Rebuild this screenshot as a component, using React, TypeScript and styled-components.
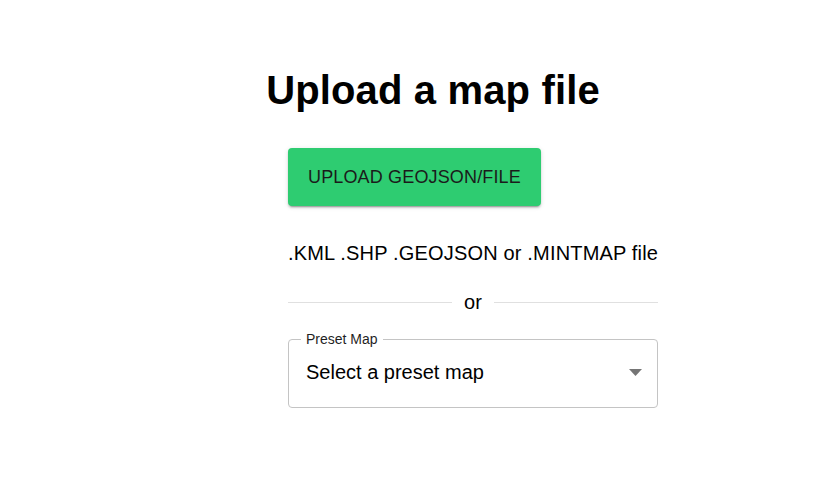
import React from 'react';
import styled, { createGlobalStyle } from 'styled-components';

const GlobalStyle = createGlobalStyle`
  body {
    margin: 0;
    background: #ffffff;
    font-family: "Liberation Sans", Arial, sans-serif;
    color: #000000;
  }
`;

const Page = styled.div`
  padding: 66px 0 0 266px;
  display: flex;
  flex-direction: column;
  align-items: flex-start;
`;

const Heading = styled.h1`
  margin: 0;
  width: 334px;
  text-align: center;
  font-size: 40px;
  line-height: 48px;
  font-weight: 700;
  letter-spacing: 0.15px;
`;

const Column = styled.div`
  margin: 34px 0 0 22px;
  width: 370px;
  display: flex;
  flex-direction: column;
  align-items: flex-start;
`;

const UploadButton = styled.button`
  height: 58px;
  padding: 0 20px;
  border: none;
  border-radius: 4px;
  background: #2ecc71;
  color: #1b1b1b;
  font-family: inherit;
  font-size: 18px;
  letter-spacing: 0.15px;
  text-transform: uppercase;
  cursor: pointer;
  box-shadow: 0 3px 1px -2px rgba(0, 0, 0, 0.2), 0 2px 2px 0 rgba(0, 0, 0, 0.14),
    0 1px 5px 0 rgba(0, 0, 0, 0.12);
`;

const Hint = styled.p`
  margin: 35px 0 0;
  font-size: 20px;
  line-height: 24px;
  letter-spacing: 0.17px;
  white-space: nowrap;
`;

const Divider = styled.div`
  margin-top: 25px;
  width: 100%;
  display: flex;
  align-items: center;
  gap: 12px;
  font-size: 20px;
  line-height: 24px;

  &::before,
  &::after {
    content: '';
    flex: 1;
    border-top: 1px solid #e0e0e0;
  }
`;

const SelectBox = styled.div`
  position: relative;
  margin-top: 25px;
  box-sizing: border-box;
  width: 100%;
  height: 69px;
  padding: 0 15px 4px 17px;
  border: 1px solid #c4c4c4;
  border-radius: 4px;
  display: flex;
  align-items: center;
  justify-content: space-between;
`;

const FloatingLabel = styled.span`
  position: absolute;
  top: -9px;
  left: 12px;
  padding: 0 5px;
  background: #ffffff;
  font-size: 14px;
  line-height: 16px;
  color: #1f1f1f;
`;

const Value = styled.span`
  font-size: 20px;
  line-height: 24px;
`;

const Arrow = styled.svg`
  width: 13px;
  height: 7px;
  margin-top: 2px;
  fill: #757575;
`;

export default function App() {
  return (
    <>
      <GlobalStyle />
      <Page>
        <Heading>Upload a map file</Heading>
        <Column>
          <UploadButton>Upload GeoJSON/File</UploadButton>
          <Hint>.KML .SHP .GEOJSON or .MINTMAP file</Hint>
          <Divider>or</Divider>
          <SelectBox>
            <FloatingLabel>Preset Map</FloatingLabel>
            <Value>Select a preset map</Value>
            <Arrow viewBox="0 0 13 7">
              <path d="M0 0l6.5 7 6.5-7z" />
            </Arrow>
          </SelectBox>
        </Column>
      </Page>
    </>
  );
}
